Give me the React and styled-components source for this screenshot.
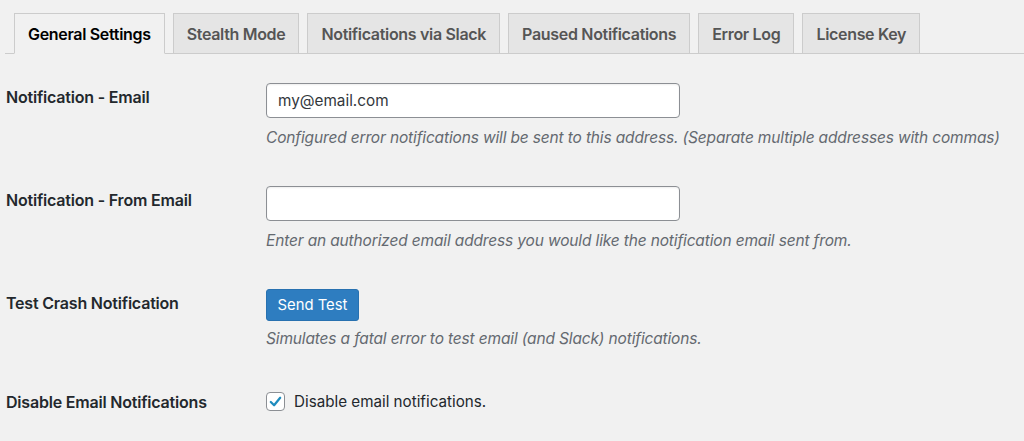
import React from "react";
import styled, { createGlobalStyle } from "styled-components";

const Global = createGlobalStyle`
  html, body { margin: 0; padding: 0; background: #f1f1f1; }
  body { font-family: Inter, "Liberation Sans", sans-serif; color: #23282d; }
`;

const Page = styled.div`
  width: 1024px;
  height: 441px;
  overflow: hidden;
  background: #f1f1f1;
  padding-left: 6px;
  box-sizing: border-box;
`;

const TabBar = styled.nav`
  display: flex;
  gap: 8px;
  margin-left: -1px;
  padding: 13px 0 0 9px;
  border-bottom: 1px solid #cccccc;
`;

const Tab = styled.div`
  box-sizing: border-box;
  display: flex;
  align-items: center;
  height: 41px;
  padding: 0 13px;
  font-size: 16px;
  font-weight: 600;
  letter-spacing: -0.32px;
  border: 1px solid #cccccc;
  margin-bottom: -1px;
  background: ${(p) => (p.$active ? "#f1f1f1" : "#e5e5e5")};
  color: ${(p) => (p.$active ? "#000" : "#555")};
  border-bottom: 1px solid ${(p) => (p.$active ? "#f1f1f1" : "#cccccc")};
`;

const Form = styled.div`
  display: flex;
  flex-direction: column;
  padding-top: 15px;
`;

const Row = styled.div`
  display: grid;
  grid-template-columns: 260px 1fr;
  height: ${(p) => p.$h || 103}px;
  padding-top: ${(p) => p.$pt ?? 14}px;
  box-sizing: border-box;
`;

const Label = styled.div`
  font-size: 16px;
  font-weight: 600;
  line-height: 20px;
  padding-top: ${(p) => p.$pt ?? 4}px;
  color: #23282d;
  letter-spacing: -0.2px;
`;

const Field = styled.div`
  display: flex;
  flex-direction: column;
  align-items: flex-start;
`;

const Input = styled.input`
  width: 414px;
  height: 35px;
  box-sizing: border-box;
  border: 1px solid #8c8f94;
  border-radius: 4px;
  background: #fff;
  padding: 0 11px;
  font-family: Inter, "Liberation Sans", sans-serif;
  font-size: 15.3px;
  color: #32373c;
  box-shadow: inset 0 1px 2px rgba(0, 0, 0, 0.07);
  outline: none;
`;

const Desc = styled.p`
  margin: ${(p) => p.$mt ?? 9}px 0 0 0;
  font-size: 15.5px;
  line-height: 22px;
  font-style: italic;
  color: #646970;
  letter-spacing: -0.15px;
`;

const Button = styled.button`
  height: 32px;
  width: 93px;
  border: 1px solid #2871b0;
  border-radius: 3px;
  background: #2e7dc0;
  color: #fff;
  font-family: Inter, "Liberation Sans", sans-serif;
  font-size: 14.8px;
  padding: 0;
  cursor: pointer;
`;

const CheckRow = styled.label`
  display: flex;
  align-items: center;
  gap: 9px;
  font-size: 15.2px;
  color: #23282d;
`;

const Box = styled.span`
  width: 19px;
  height: 19px;
  box-sizing: border-box;
  border: 1px solid #8c8f94;
  border-radius: 4px;
  background: #fff;
  display: flex;
  align-items: center;
  justify-content: center;
`;

const Check = () => (
  <svg width="15" height="15" viewBox="0 0 16 16">
    <path d="M3 8.5 L6.5 12 L13 4" fill="none" stroke="#1e8cbe" strokeWidth="2.4" strokeLinecap="round" strokeLinejoin="round" />
  </svg>
);

const tabs = [
  "General Settings",
  "Stealth Mode",
  "Notifications via Slack",
  "Paused Notifications",
  "Error Log",
  "License Key",
];

export default function App() {
  return (
    <Page>
      <Global />
      <TabBar>
        {tabs.map((t, i) => (
          <Tab key={t} $active={i === 0}>{t}</Tab>
        ))}
      </TabBar>
      <Form>
        <Row>
          <Label>Notification - Email</Label>
          <Field>
            <Input defaultValue="my@email.com" />
            <Desc>Configured error notifications will be sent to this address. (Separate multiple addresses with commas)</Desc>
          </Field>
        </Row>
        <Row>
          <Label>Notification - From Email</Label>
          <Field>
            <Input defaultValue="" />
            <Desc>Enter an authorized email address you would like the notification email sent from.</Desc>
          </Field>
        </Row>
        <Row>
          <Label>Test Crash Notification</Label>
          <Field>
            <Button>Send Test</Button>
            <Desc $mt={7}>Simulates a fatal error to test email (and Slack) notifications.</Desc>
          </Field>
        </Row>
        <Row $pt={14}>
          <Label $pt={0}>Disable Email Notifications</Label>
          <Field>
            <CheckRow>
              <Box><Check /></Box>
              Disable email notifications.
            </CheckRow>
          </Field>
        </Row>
      </Form>
    </Page>
  );
}
